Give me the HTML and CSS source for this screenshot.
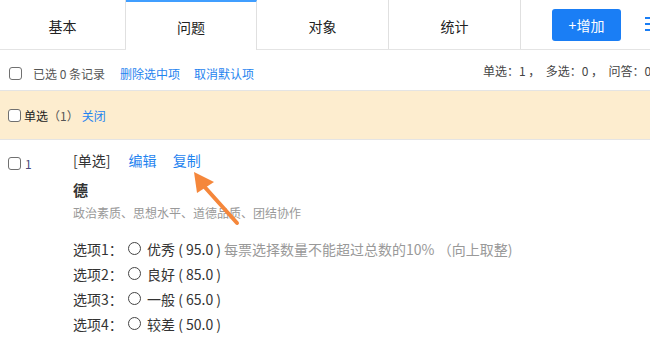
FILE: index.html
```html
<!DOCTYPE html>
<html lang="zh">
<head>
<meta charset="utf-8">
<link rel="stylesheet" href="styles.css">
</head>
<body>
<div class="page">
  <div class="tabs">
    <div class="tab tab-first">基本</div>
    <div class="tab active">问题</div>
    <div class="tab">对象</div>
    <div class="tab">统计</div>
    <button class="add">+增加</button>
    <svg class="menu" width="12" height="16" viewBox="0 0 12 16">
      <rect x="0" y="2" width="12" height="2" fill="#1a7ef5"/>
      <rect x="0" y="8" width="12" height="2" fill="#1a7ef5"/>
      <rect x="0" y="14" width="12" height="2" fill="#1a7ef5"/>
    </svg>
  </div>

  <div class="toolbar">
    <div class="tool-left">
      <span class="cb"></span>
      <span class="selected">已选 0 条记录</span>
      <a class="link link-del">删除选中项</a>
      <a class="link link-cancel">取消默认项</a>
    </div>
    <div class="summary">单选：1 ，&nbsp; 多选：0 ，&nbsp; 问答：0</div>
  </div>

  <div class="group">
    <span class="cb"></span>
    <span class="group-name">单选</span>
    <span class="group-count">（1）</span>
    <a class="link group-close">关闭</a>
  </div>

  <div class="item">
    <div class="item-left">
      <span class="cb"></span>
      <span class="item-no">1</span>
    </div>
    <div class="item-body">
      <div class="item-head">
        <span class="item-type">[单选]</span>
        <a class="link link-edit">编辑</a>
        <a class="link link-copy">复制</a>
      </div>
      <div class="item-title">德</div>
      <div class="item-desc">政治素质、思想水平、道德品质、团结协作</div>
      <div class="options">
        <div class="option"><span class="opt-label">选项1：</span><span class="radio"></span><span class="opt-text">优秀 ( 95.0 )</span><span class="opt-note">每票选择数量不能超过总数的10% （向上取整)</span></div>
        <div class="option"><span class="opt-label">选项2：</span><span class="radio"></span><span class="opt-text">良好 ( 85.0 )</span></div>
        <div class="option"><span class="opt-label">选项3：</span><span class="radio"></span><span class="opt-text">一般 ( 65.0 )</span></div>
        <div class="option"><span class="opt-label">选项4：</span><span class="radio"></span><span class="opt-text">较差 ( 50.0 )</span></div>
      </div>
    </div>
  </div>

  <svg class="arrow" width="60" height="60" viewBox="0 0 60 60">
    <line x1="12" y1="14" x2="47" y2="53" stroke="#f5873b" stroke-width="4" stroke-linecap="round"/>
    <polygon points="4,2 7,23 24,12" fill="#f5873b"/>
  </svg>
</div>
</body>
</html>
```

FILE: styles.css
```css
html, body {
  margin: 0;
  padding: 0;
  background: #fff;
  overflow: hidden;
}

.page {
  position: relative;
  width: 650px;
  height: 344px;
  overflow: hidden;
  font-family: "Noto Sans CJK SC", "Noto Sans", sans-serif;
  color: #333;
}

.link {
  color: #1f84ef;
  cursor: pointer;
}

.cb {
  display: inline-block;
  box-sizing: border-box;
  width: 13px;
  height: 13px;
  border: 1px solid #707070;
  border-radius: 3px;
  background: #fff;
  flex: none;
}

/* tabs */
.tabs {
  display: flex;
  height: 50px;
  box-sizing: border-box;
  border-bottom: 1px solid #e4e4e4;
  white-space: nowrap;
}

.tab {
  box-sizing: border-box;
  height: 49px;
  width: 132px;
  padding-top: 3px;
  border-right: 1px solid #e0e0e0;
  display: flex;
  align-items: center;
  justify-content: center;
  font-size: 14px;
  color: #222;
  flex: none;
}

.tab-first {
  width: 126px;
}

.tab.active {
  width: 131px;
  height: 50px;
  margin-bottom: -1px;
  border-top: 2px solid #409eff;
  padding-top: 1px;
  background: #fff;
}

.add {
  flex: none;
  align-self: flex-start;
  margin-top: 9px;
  margin-left: 31px;
  width: 69px;
  height: 32px;
  border: none;
  border-radius: 3px;
  background: #1a7ef5;
  color: #fff;
  font-family: inherit;
  font-size: 14px;
  padding: 0;
}

.menu {
  flex: none;
  margin-left: 24px;
  margin-top: 15px;
}

/* toolbar */
.toolbar {
  display: flex;
  height: 40px;
  white-space: nowrap;
  font-size: 12px;
}

.tool-left {
  flex: 0 0 483px;
  display: flex;
  align-items: center;
  padding-left: 9px;
  padding-top: 6px;
  box-sizing: border-box;
}

.selected {
  margin-left: 11px;
  color: #555;
}

.link-del {
  margin-left: 15px;
}

.link-cancel {
  margin-left: 14px;
}

.summary {
  flex: none;
  padding-top: 12px;
  line-height: 17px;
  color: #444;
}

/* group band */
.group {
  height: 50px;
  box-sizing: border-box;
  border-top: 1px solid #e4e4e4;
  border-bottom: 1px solid #e4e4e4;
  background: #fdedcf;
  display: flex;
  align-items: center;
  padding-left: 8px;
  font-size: 12px;
  white-space: nowrap;
}

.group-name {
  margin-left: 3px;
  color: #222;
}

.group-count {
  color: #555;
}

.group-close {
  margin-left: 3px;
}

/* item */
.item {
  display: flex;
  padding-top: 10px;
}

.item-left {
  flex: 0 0 73px;
  box-sizing: border-box;
  padding-left: 8px;
  padding-top: 6px;
  display: flex;
  align-items: center;
  align-self: flex-start;
}

.item-no {
  margin-left: 4px;
  font-size: 12px;
  line-height: 13px;
  margin-top: 1px;
  color: #4a4a7a;
}

.item-body {
  flex: 1;
  white-space: nowrap;
}

.item-head {
  font-size: 14px;
  line-height: 20px;
}

.item-type {
  color: #333;
}

.link-edit {
  margin-left: 15px;
}

.link-copy {
  margin-left: 13px;
}

.item-title {
  margin-top: 10px;
  line-height: 20px;
  font-size: 15px;
  font-weight: bold;
  color: #333;
}

.item-desc {
  margin-top: 4px;
  line-height: 18px;
  font-size: 12px;
  color: #999;
}

.options {
  margin-top: 14px;
}

.option {
  display: flex;
  align-items: center;
  height: 25px;
  font-size: 14px;
  color: #333;
}

.opt-label {
  flex: 0 0 55px;
}

.radio {
  flex: none;
  box-sizing: border-box;
  width: 13px;
  height: 13px;
  border: 1px solid #444;
  border-radius: 50%;
  margin-right: 6px;
}

.opt-note {
  margin-left: 3px;
  color: #999;
}

/* annotation arrow */
.arrow {
  position: absolute;
  left: 190px;
  top: 170px;
}
```
